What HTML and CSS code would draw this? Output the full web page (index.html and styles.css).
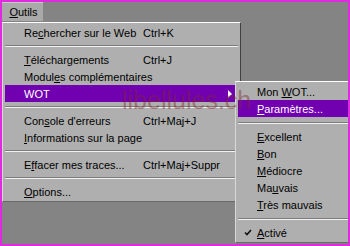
FILE: index.html
```html
<!DOCTYPE html>
<html lang="fr">
<head>
    <meta charset="UTF-8">
    <title>Outils - WOT</title>
    <link rel="stylesheet" href="styles.css">
</head>
<body>
    <div class="screen">
        <div class="menubar">
            <span class="menubar-item"><u>O</u>utils</span>
        </div>
        <div class="menu main-menu">
            <div class="item"><span class="label">Re<u>c</u>hercher sur le Web</span><span class="key">Ctrl+K</span></div>
            <div class="sep"></div>
            <div class="item"><span class="label"><u>T</u>éléchargements</span><span class="key">Ctrl+J</span></div>
            <div class="item"><span class="label">Modul<u>e</u>s complémentaires</span></div>
            <div class="item active">
                <span class="label">WOT</span><span class="arrow"></span>
                <div class="menu submenu">
                    <div class="item"><span class="label">Mon <u>W</u>OT...</span></div>
                    <div class="item active"><span class="label"><u>P</u>aramètres...</span></div>
                    <div class="sep"></div>
                    <div class="item"><span class="label"><u>E</u>xcellent</span></div>
                    <div class="item"><span class="label"><u>B</u>on</span></div>
                    <div class="item"><span class="label"><u>M</u>édiocre</span></div>
                    <div class="item"><span class="label">Ma<u>u</u>vais</span></div>
                    <div class="item"><span class="label"><u>T</u>rès mauvais</span></div>
                    <div class="sep"></div>
                    <div class="item">
                        <svg class="check" width="8" height="8" viewBox="0 0 8 8"><path d="M1 3.5 L3 5.5 L7 1" fill="none" stroke="#111" stroke-width="1.6"/></svg>
                        <span class="label"><u>A</u>ctivé</span>
                    </div>
                </div>
            </div>
            <div class="sep"></div>
            <div class="item"><span class="label">Con<u>s</u>ole d'erreurs</span><span class="key">Ctrl+Maj+J</span></div>
            <div class="item"><span class="label"><u>I</u>nformations sur la page</span></div>
            <div class="sep"></div>
            <div class="item"><span class="label">E<u>f</u>facer mes traces...</span><span class="key">Ctrl+Maj+Suppr</span></div>
            <div class="sep"></div>
            <div class="item"><span class="label"><u>O</u>ptions...</span></div>
        </div>
        <div class="watermark">libellules.ch</div>
    </div>
</body>
</html>
```
FILE: styles.css
```css
body {
    margin: 0;
    padding: 2px;
    background-color: #e02ae0;
    font-family: "Liberation Sans", Arial, sans-serif;
    font-size: 11px;
    color: #000;
}

.screen {
    position: relative;
    width: 346px;
    height: 242px;
    background-color: #848484;
    overflow: hidden;
}

.menubar {
    height: 20px;
}

.menubar-item {
    display: inline-block;
    width: 39px;
    height: 18px;
    line-height: 18px;
    padding-left: 2px;
    text-align: center;
    background-color: #a9a9a9;
    border-top: 1px solid #c8c8c8;
}

.menu {
    background-color: #afafaf;
    border-top: 1px solid #ffffff;
    border-left: 1px solid #d8d8d8;
    border-right: 1px solid #404040;
    border-bottom: 1px solid #6a6a6a;
    padding: 1px 2px;
}

.main-menu {
    width: 233px;
}

.item {
    position: relative;
    display: flex;
    align-items: center;
    height: 17px;
    padding-left: 19px;
}

.item .label {
    width: 119px;
    white-space: nowrap;
}

.item .key {
    white-space: nowrap;
}

.item.active {
    background-color: #7000b0;
    color: #fff;
}

.arrow {
    position: absolute;
    right: 6px;
    top: 5px;
    border-left: 4px solid #fff;
    border-top: 4px solid transparent;
    border-bottom: 4px solid transparent;
}

.sep {
    height: 0;
    margin: 4px 0;
    border-top: 1px solid #7c7c7c;
    border-bottom: 1px solid #f2f2f2;
}

.submenu {
    position: absolute;
    left: 230px;
    top: -4px;
    width: 120px;
    color: #000;
}

.submenu .sep {
    margin: 5px 0 4px;
}

.submenu .item .label {
    width: auto;
}

.check {
    position: absolute;
    left: 6px;
    top: 5px;
}

.watermark {
    position: absolute;
    left: 120px;
    top: 84px;
    font-size: 25px;
    color: rgba(130, 40, 45, 0.45);
    pointer-events: none;
}
```
